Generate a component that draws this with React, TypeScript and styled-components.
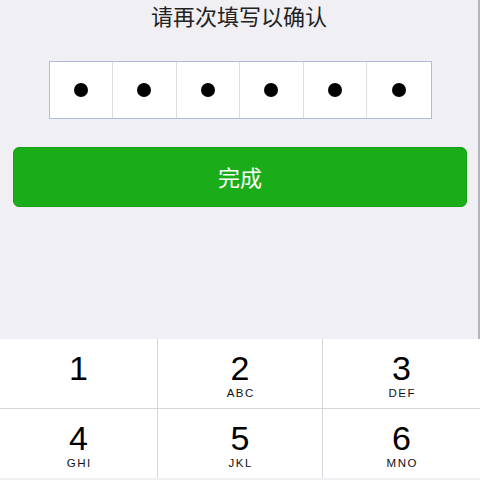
import React from "react";
import styled, { createGlobalStyle } from "styled-components";

const Global = createGlobalStyle`
  html, body { margin: 0; padding: 0; }
  body {
    width: 480px;
    height: 480px;
    overflow: hidden;
    background: #efeff4;
    font-family: "Liberation Sans", "Noto Sans CJK SC", sans-serif;
  }
`;

const Page = styled.div`
  width: 480px;
  height: 480px;
  overflow: hidden;
  display: flex;
  flex-direction: column;
`;

const Upper = styled.section`
  box-sizing: border-box;
  height: 339px;
  flex: 0 0 339px;
  display: flex;
  flex-direction: column;
  align-items: center;
  background: #efeff4;
  border-right: 2px solid #b4b4bc;
`;

const Title = styled.h1`
  margin: 0;
  padding-top: 3px;
  font-family: "Noto Sans CJK SC", sans-serif;
  font-weight: 400;
  font-size: 22px;
  line-height: 25px;
  color: #222222;
`;

const PinBox = styled.div`
  margin-top: 33px;
  margin-left: 2px;
  box-sizing: border-box;
  width: 383px;
  height: 58px;
  display: grid;
  grid-template-columns: repeat(6, 1fr);
  background: #ffffff;
  border: 1px solid #b2bbdc;
`;

const PinCell = styled.div<{ $last?: boolean }>`
  display: flex;
  align-items: center;
  justify-content: center;
  border-right: ${(p) => (p.$last ? "none" : "1px solid #dcdce2")};
`;

const Dot = styled.span`
  width: 14px;
  height: 14px;
  border-radius: 50%;
  background: #000000;
`;

const DoneButton = styled.button`
  margin-top: 28px;
  margin-left: 2px;
  box-sizing: border-box;
  width: 454px;
  height: 60px;
  border: 1px solid #18a117;
  border-radius: 6px;
  background: #1aad19;
  color: #ffffff;
  font-family: "Noto Sans CJK SC", sans-serif;
  font-size: 22px;
  padding: 0;
  padding-bottom: 2px;
  cursor: pointer;
`;

const Keypad = styled.div`
  display: grid;
  grid-template-columns: 157px 164px 157px;
  grid-auto-rows: 69px;
  gap: 1px;
  background: #d6d6da;
`;

const Key = styled.div`
  background: #ffffff;
  display: flex;
  flex-direction: column;
  align-items: center;
  padding-top: 11px;
  box-sizing: border-box;
  overflow: hidden;
`;

const Digit = styled.span`
  font-family: "Liberation Sans", Arial, sans-serif;
  font-size: 34px;
  line-height: 37px;
  color: #000000;
`;

const Letters = styled.span`
  font-family: "Liberation Sans", Arial, sans-serif;
  font-size: 11.5px;
  line-height: 12px;
  letter-spacing: 1.5px;
  padding-left: 1.5px;
  color: #111111;
`;

const keys: [string, string][] = [
  ["1", ""],
  ["2", "ABC"],
  ["3", "DEF"],
  ["4", "GHI"],
  ["5", "JKL"],
  ["6", "MNO"],
];

export default function App() {
  return (
    <>
      <Global />
      <Page>
        <Upper>
          <Title>请再次填写以确认</Title>
          <PinBox>
            {Array.from({ length: 6 }).map((_, i) => (
              <PinCell key={i} $last={i === 5}>
                <Dot />
              </PinCell>
            ))}
          </PinBox>
          <DoneButton>完成</DoneButton>
        </Upper>
        <Keypad>
          {keys.map(([d, l]) => (
            <Key key={d}>
              <Digit>{d}</Digit>
              {l && <Letters>{l}</Letters>}
            </Key>
          ))}
        </Keypad>
      </Page>
    </>
  );
}
